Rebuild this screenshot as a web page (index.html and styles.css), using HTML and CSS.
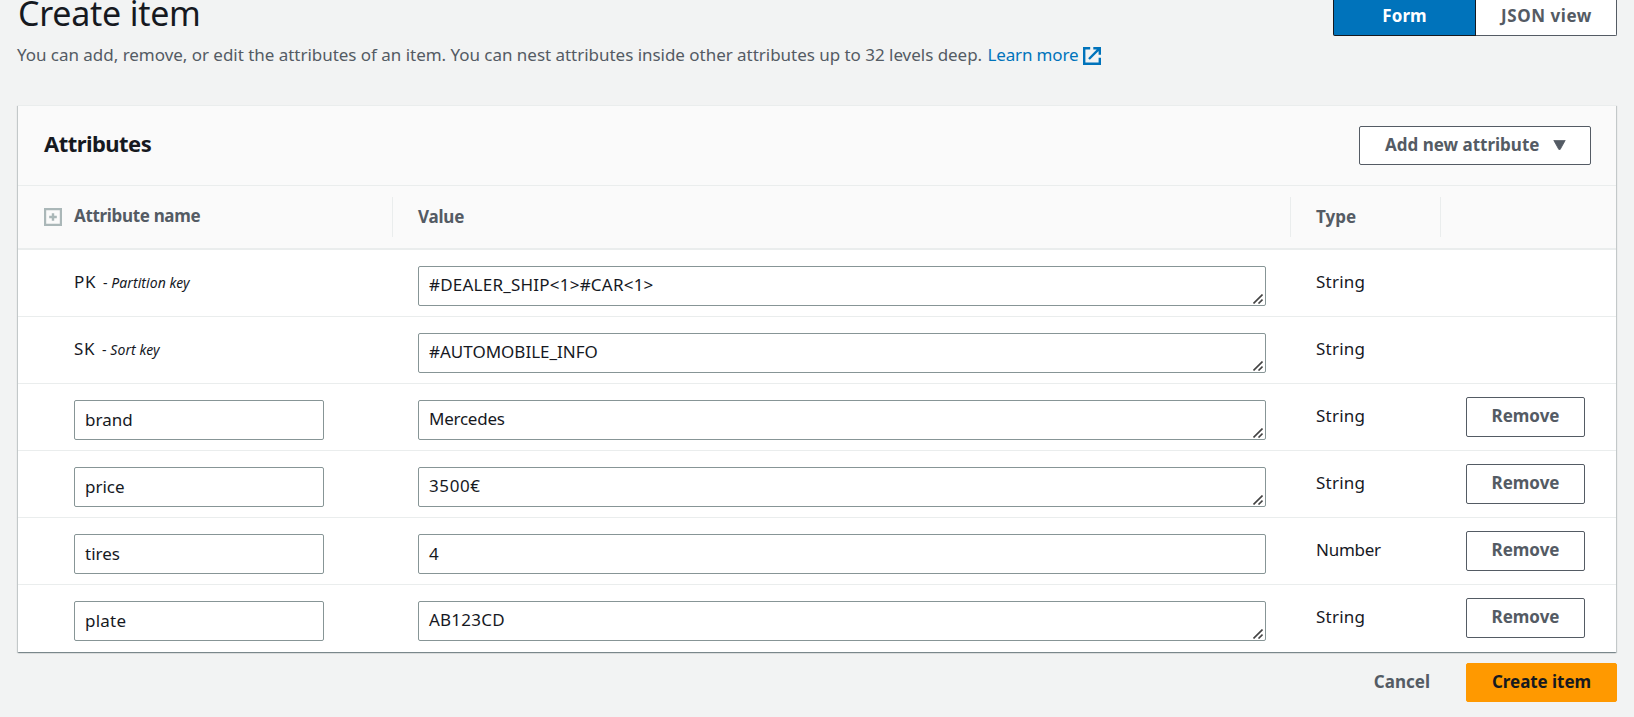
FILE: index.html
```
<!DOCTYPE html>
<html lang="en">
<head>
<meta charset="utf-8">
<title>Create item</title>
<link rel="stylesheet" href="styles.css">
</head>
<body>
<svg class="defs" width="0" height="0">
  <symbol id="grip" viewBox="0 0 10 10"><path d="M0.5 9.5 9.5 0.5M5.5 9.5 9.5 5.5" fill="none" stroke="#444" stroke-width="1.6"/></symbol>
</svg>
<header class="page-header">
  <div class="intro">
    <h1>Create item</h1>
    <p>You can add, remove, or edit the attributes of an item. You can nest attributes inside other attributes up to 32 levels deep. <a class="learn">Learn more<svg class="external" viewBox="0 0 18 18"><path d="M7.2 1.2H1.2V16.8H16.8V10.8M10.3 1.2H16.8V7.8M16.3 1.7 6 12" fill="none" stroke="currentColor" stroke-width="2.4"/></svg></a></p>
  </div>
  <div class="toggle"><span class="segment selected">Form</span><span class="segment json">JSON view</span></div>
</header>
<main class="card">
  <div class="card-header">
    <h2>Attributes</h2>
    <span class="button add">Add new attribute<svg class="caret" viewBox="0 0 13 10"><path d="M0.8 0.4H12.2L7.2 9.4Q6.5 10 5.8 9.4Z" fill="currentColor" stroke="currentColor" stroke-width="0.8" stroke-linejoin="round"/></svg></span>
  </div>
  <div class="row head">
    <div class="cell name"><svg class="expand" viewBox="0 0 18 18"><path d="M1 1H17V17H1ZM9 5.2V12.8M5.2 9H12.8" fill="none" stroke="currentColor" stroke-width="2.4"/></svg><span class="head-name">Attribute name</span></div>
    <div class="cell"><span class="value-title">Value</span></div>
    <div class="cell"><span>Type</span></div>
    <div class="cell"></div>
  </div>
  <div class="row">
    <div class="cell name"><span class="key">PK</span><span class="hint">- <i>Partition key</i></span></div>
    <div class="cell"><div class="field area loose">#DEALER_SHIP&lt;1&gt;#CAR&lt;1&gt;<svg class="grip"><use href="#grip"/></svg></div></div>
    <div class="cell type loose">String</div>
    <div class="cell"></div>
  </div>
  <div class="row">
    <div class="cell name"><span class="key">SK</span><span class="hint">- <i>Sort key</i></span></div>
    <div class="cell"><div class="field area">#AUTOMOBILE_INFO<svg class="grip"><use href="#grip"/></svg></div></div>
    <div class="cell type loose">String</div>
    <div class="cell"></div>
  </div>
  <div class="row">
    <div class="cell name"><div class="field">brand</div></div>
    <div class="cell"><div class="field area tight">Mercedes<svg class="grip"><use href="#grip"/></svg></div></div>
    <div class="cell type loose">String</div>
    <div class="cell action"><span class="button remove">Remove</span></div>
  </div>
  <div class="row">
    <div class="cell name"><div class="field">price</div></div>
    <div class="cell"><div class="field area wide">3500€<svg class="grip"><use href="#grip"/></svg></div></div>
    <div class="cell type loose">String</div>
    <div class="cell action"><span class="button remove">Remove</span></div>
  </div>
  <div class="row">
    <div class="cell name"><div class="field">tires</div></div>
    <div class="cell"><div class="field">4</div></div>
    <div class="cell type tight">Number</div>
    <div class="cell action"><span class="button remove">Remove</span></div>
  </div>
  <div class="row">
    <div class="cell name"><div class="field loose">plate</div></div>
    <div class="cell"><div class="field area loose">AB123CD<svg class="grip"><use href="#grip"/></svg></div></div>
    <div class="cell type loose">String</div>
    <div class="cell action"><span class="button remove">Remove</span></div>
  </div>
</main>
<footer class="actions">
  <span class="cancel">Cancel</span>
  <span class="button primary">Create item</span>
</footer>
</body>
</html>
```
FILE: styles.css
```
* { box-sizing: border-box; }
body {
  margin: 0;
  height: 717px;
  overflow: hidden;
  padding: 0 17px 0 18px;
  background: #f2f3f3;
  color: #16191f;
  font: 17px/22px "Noto Sans", sans-serif;
}
.defs { display: block; }
h1, h2, p { margin: 0; }
.page-header { display: flex; justify-content: space-between; align-items: flex-start; height: 105px; }
h1 { font-size: 34px; line-height: 27px; font-weight: 400; letter-spacing: -0.25px; }
p { margin: 17px 0 0 -1px; color: #545b64; letter-spacing: -0.03px; white-space: nowrap; }
.learn { color: #0073bb; letter-spacing: -0.16px; margin-left: 1px; }
.external { width: 18px; height: 18px; margin-left: 5px; vertical-align: -4px; }
.toggle { display: flex; height: 36px; width: 284px; font-weight: 700; line-height: 32px; text-align: center; letter-spacing: 0.1px; }
.segment { flex: 1; background: #fff; color: #545b64; border: 1px solid #545b64; border-top: 0; border-left: 0; border-radius: 0 0 2px 0; }
.selected { flex: 0 0 143px; background: #0073bb; color: #fff; border: 1px solid #16191f; border-top: 0; border-radius: 0 0 0 2px; }
.json { letter-spacing: 0.55px; padding-left: 1px; }

.card {
  width: 1598px;
  height: 547px;
  border-top: 1px solid #eaeded;
  background: #fff;
  box-shadow: 0 1px 1px 0 rgba(0, 28, 36, .3), 1px 1px 1px 0 rgba(0, 28, 36, .15), -1px 1px 1px 0 rgba(0, 28, 36, .15);
}
.card-header {
  display: flex;
  justify-content: space-between;
  height: 80px;
  padding: 20px 25px 0 26px;
  background: #fafafa;
  border-bottom: 1px solid #eaeded;
}
h2 { font-size: 22px; line-height: 35px; font-weight: 700; letter-spacing: -0.55px; }
.button {
  display: block;
  border: 1px solid #545b64;
  border-radius: 2px;
  background: #fff;
  color: #545b64;
  font-weight: 700;
  text-align: center;
  white-space: nowrap;
}
.add { width: 232px; height: 39px; line-height: 35px; padding-left: 25px; text-align: left; }
.caret { width: 13px; height: 10px; margin-left: 14px; vertical-align: 1px; }

.row {
  display: grid;
  grid-template-columns: 374px 898px 150px 176px;
  height: 67px;
  border-bottom: 1px solid #eaeded;
}
.row:last-child { border-bottom: 0; }
.cell { padding: 16px 0 0 26px; }
.name { padding-left: 56px; }
.head { height: 64px; padding-top: 11px; background: #fafafa; border-bottom: 2px solid #eaeded; color: #545b64; font-weight: 700; }
.head .cell { height: 40px; padding: 9px 0 0 25px; border-left: 1px solid #eaeded; }
.head .name { display: flex; gap: 12px; padding: 8px 0 0 26px; border-left: 0; }
.head-name { letter-spacing: -0.33px; }
.value-title { letter-spacing: -0.2px; }
.expand { width: 18px; height: 18px; margin-top: 3px; color: #aab7b8; }
.row:not(.head) .name:has(.key) { padding-top: 21px; }
.key { letter-spacing: 0.6px; }
.hint { margin-left: 7px; font-size: 14px; letter-spacing: 0.06px; }
.field {
  position: relative;
  width: 250px;
  height: 40px;
  padding-left: 10px;
  border: 1px solid #879596;
  border-radius: 2px;
  line-height: 37px;
}
.cell:nth-child(2) .field { width: 848px; }
.area, .cell:nth-child(2) .area { line-height: 35px; }
.grip { position: absolute; right: 2px; bottom: 1px; width: 10px; height: 10px; }
.type { padding-top: 21px; }
.action { padding-top: 13px; }
.remove { width: 119px; height: 40px; line-height: 35px; }
.loose { letter-spacing: 0.22px; }
.wide { letter-spacing: 0.6px; }
.tight { letter-spacing: -0.25px; }

.actions { display: flex; justify-content: flex-end; gap: 36px; padding-top: 11px; line-height: 37px; }
.cancel { color: #545b64; font-weight: 700; }
.primary { width: 151px; height: 39px; line-height: 36px; background: #ff9900; border-color: #ff9900; color: #16191f; letter-spacing: -0.05px; }
```
